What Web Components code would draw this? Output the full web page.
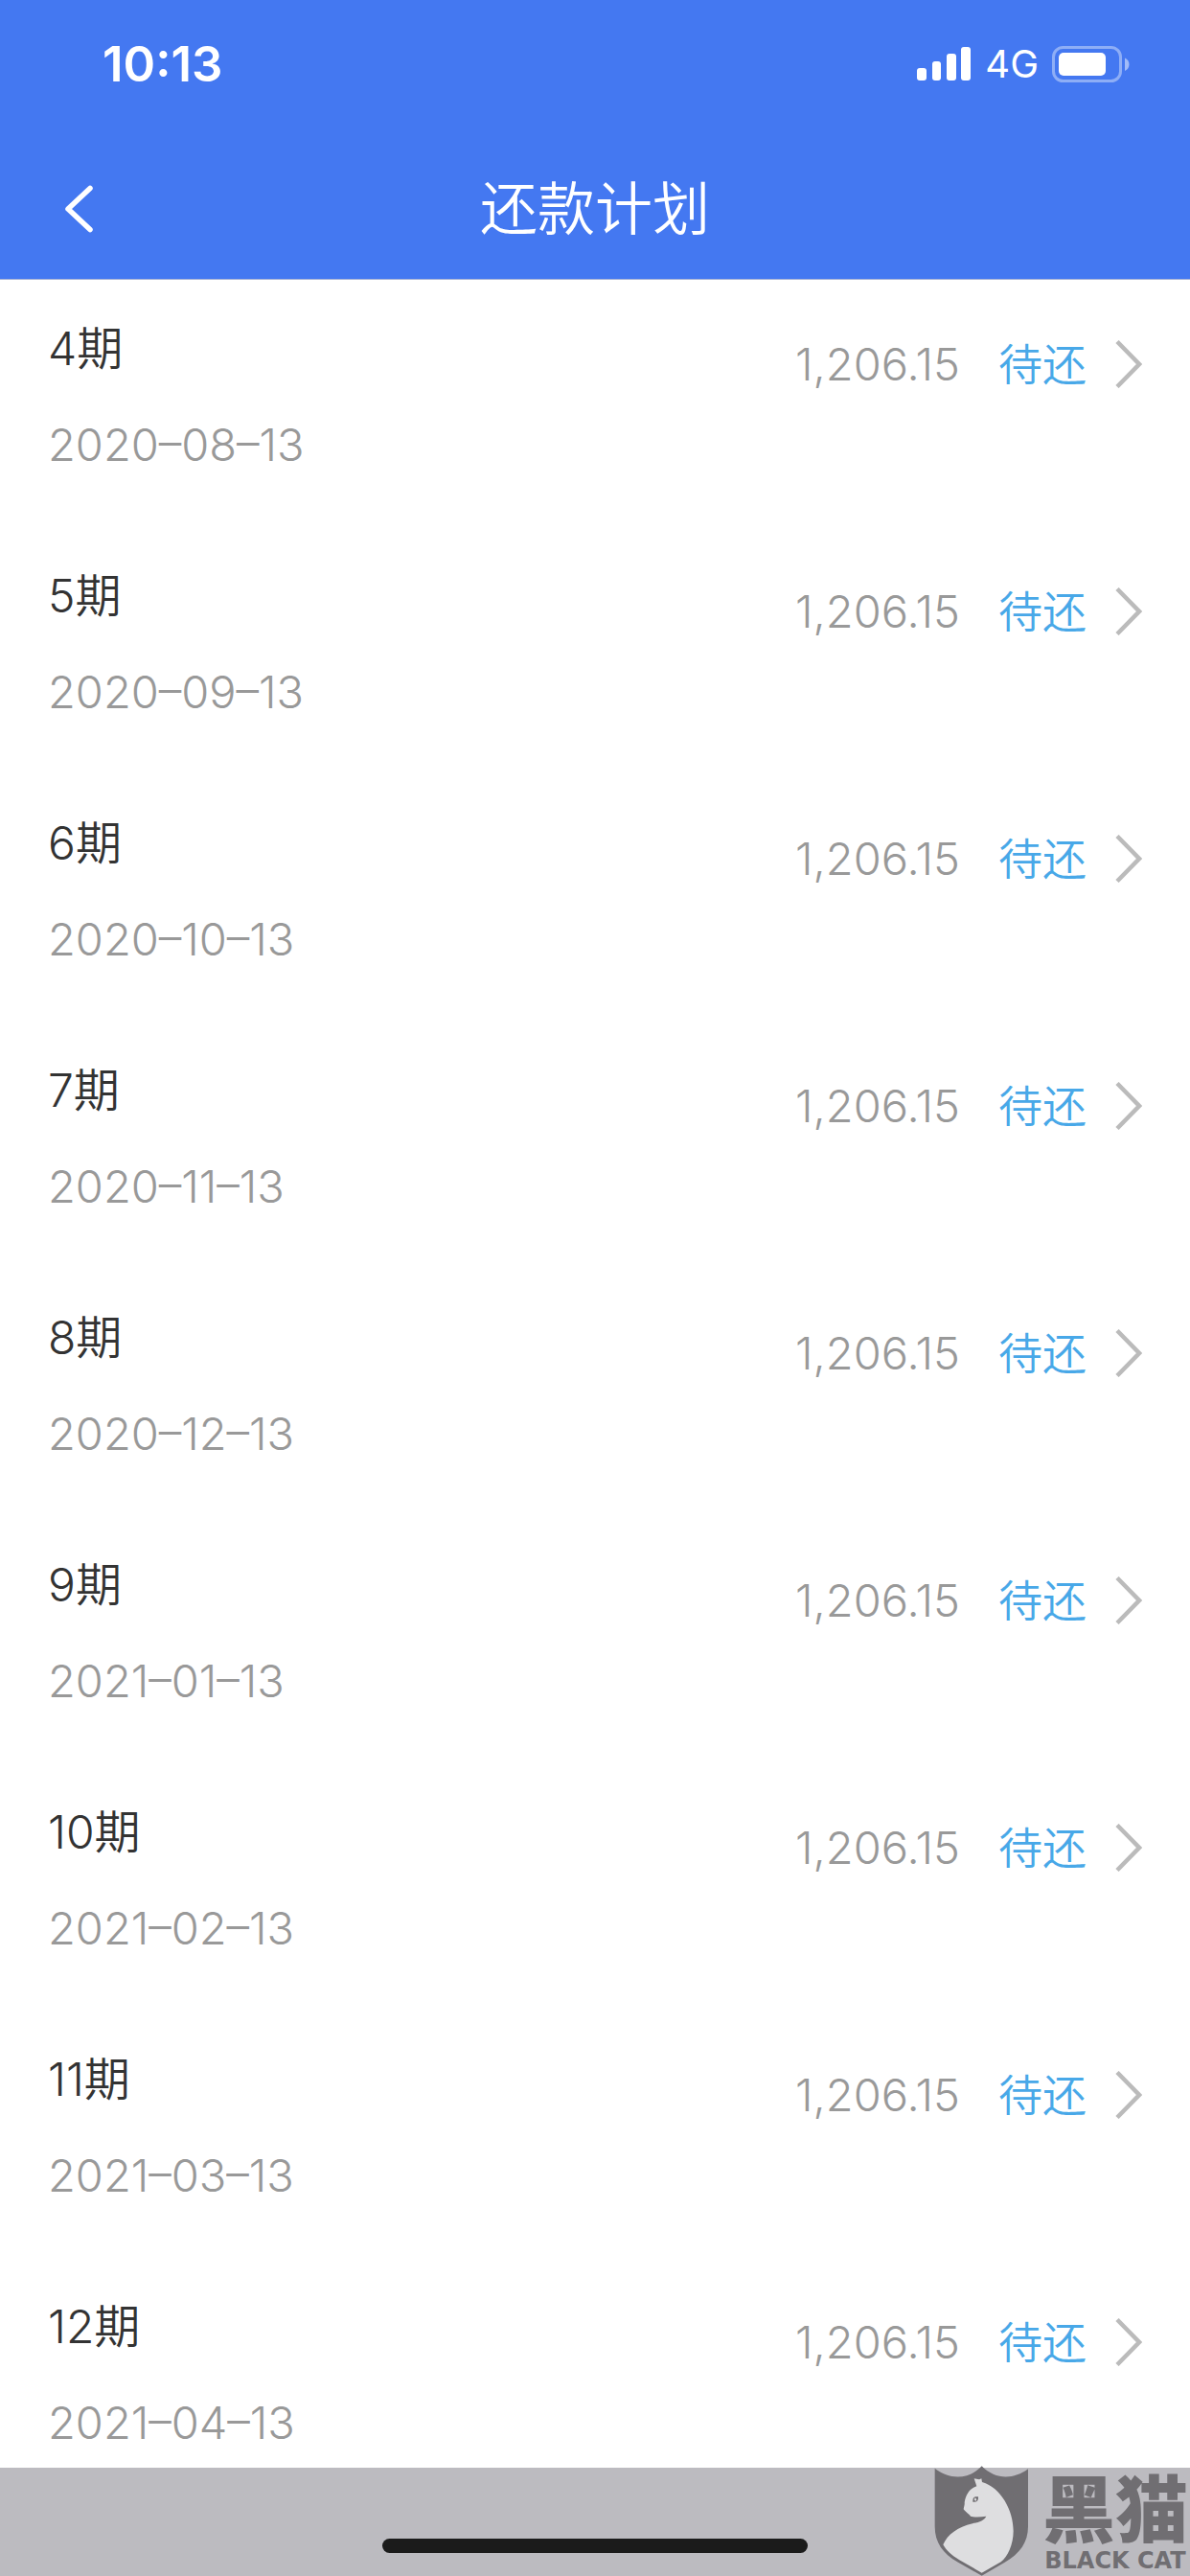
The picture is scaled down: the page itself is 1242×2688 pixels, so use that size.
<!DOCTYPE html>
<html lang="zh-CN">
<head>
<meta charset="utf-8">
<meta name="viewport" content="width=device-width, initial-scale=1">
<title>还款计划</title>
<style>
  body { margin: 0; background: #fff; font-family: Inter, "Noto Sans CJK SC", sans-serif; }
</style>
</head>
<body>
<repayment-app></repayment-app>

<script>
const define = (name, html, setup) => {
  const template = document.createElement('template');
  template.innerHTML = html;
  customElements.define(name, class extends HTMLElement {
    connectedCallback() {
      if (this.shadowRoot) return;
      const root = this.attachShadow({ mode: 'open' });
      root.append(template.content.cloneNode(true));
      if (setup) setup(root, this);
    }
  });
};

define('status-bar', `
  <style>
    :host { display: flex; align-items: center; justify-content: space-between;
      height: 134px; padding: 0 62px 0 107px; box-sizing: border-box; color: #fff; }
    time { font-size: 51px; font-weight: 600; line-height: 60px; }
    .right { display: flex; align-items: center; gap: 14px; font-size: 40px; line-height: 48px; }
    svg { display: block; }
  </style>
  <time>10:13</time>
  <div class="right">
    <svg width="57" height="36" viewBox="0 0 57 36" fill="#fff" aria-hidden="true">
      <rect x="0" y="22" width="10" height="13" rx="3"/><rect x="16" y="15" width="9" height="20" rx="3"/>
      <rect x="31" y="7" width="10" height="28" rx="3"/><rect x="46" y="0" width="10" height="35" rx="3"/>
    </svg>
    <span>4G</span>
    <svg width="82" height="38" viewBox="0 0 82 38" aria-hidden="true">
      <rect x="1.5" y="1.5" width="70" height="35" rx="10" fill="none" stroke="#fff" stroke-opacity=".4" stroke-width="3"/>
      <rect x="7" y="7" width="49" height="24" rx="5" fill="#fff"/>
      <path d="M76 12.500c6 2.500 6 11 0 13.500z" fill="#fff" fill-opacity=".5"/>
    </svg>
  </div>`);

define('nav-bar', `
  <style>
    :host { display: grid; grid-template-columns: 1fr auto 1fr; align-items: center;
      height: 158px; padding: 10px 40px 0; box-sizing: border-box; color: #fff; border-bottom: 1px solid #a9b3d6; }
    button { all: unset; justify-self: start; padding: 20px 26px; cursor: pointer; }
    svg { display: block; }
    h1 { margin: 0; font-size: 60px; line-height: 80px; font-weight: 350; }
  </style>
  <button type="button" aria-label="返回">
    <svg width="32" height="52" viewBox="0 0 32 52" fill="none" stroke="#fff" stroke-width="5.500" stroke-linecap="round" stroke-linejoin="round"><path d="M28 4.500L5 26l23 21.500"/></svg>
  </button>
  <h1><slot></slot></h1>`);

define('plan-row', `
  <style>
    :host { display: block; }
    a { display: flex; align-items: flex-start; justify-content: space-between;
      padding: 42px 50px 56px; color: inherit; text-decoration: none; }
    .term { display: flex; flex-direction: column; gap: 40px; line-height: 60px;
      font-size: 48px; font-weight: 350; color: #333; }
    time { font-size: 47px; font-weight: 350; color: #999; }
    .state, .end { display: flex; align-items: center; }
    .state { gap: 40px; padding-top: 16px;
      font-size: 47px; line-height: 60px; font-weight: 350; color: #999; }
    .end { gap: 30px; }
    .status { font-size: 46px; color: #48a8e8; }
    svg { display: block; }
  </style>
  <a href="#">
    <div class="term"><span class="no"></span><time></time></div>
    <div class="state"><span class="amount"></span>
      <div class="end"><span class="status"><slot></slot></span>
      <svg width="28" height="50" viewBox="0 0 28 50" fill="none" stroke="#bbb" stroke-width="4.500" aria-hidden="true"><path d="M2 1.500L25 25 2 48.500"/></svg></div>
    </div>
  </a>`, (root, host) => {
    root.querySelector('.no').textContent = host.getAttribute('term') + '期';
    const time = root.querySelector('time');
    time.dateTime = host.getAttribute('date');
    time.textContent = time.dateTime.replaceAll('-', '–');
    root.querySelector('.amount').textContent = host.getAttribute('amount');
  });

define('plan-list', `
  <style>:host { display: block; flex: 1; min-height: 0; overflow: hidden; background: #fff; }</style>
  <div class="rows"></div>`, root => {
    const dates = ['2020-08-13', '2020-09-13', '2020-10-13', '2020-11-13', '2020-12-13',
      '2021-01-13', '2021-02-13', '2021-03-13', '2021-04-13'];
    dates.forEach((date, i) => {
      const row = document.createElement('plan-row');
      row.setAttribute('term', i + 4);
      row.setAttribute('date', date);
      row.setAttribute('amount', '1,206.15');
      row.textContent = '待还';
      root.querySelector('.rows').append(row);
    });
  });

define('black-cat-mark', `
  <style>
    :host { display: flex; align-items: flex-end; gap: 14px; padding-right: 2px; color: #706e72; }
    svg { display: block; }
    .name { display: flex; flex-direction: column; align-items: center; padding-bottom: 4px; }
    .zh { font: 900 76px/78px "Liberation Sans", "Noto Sans CJK SC", sans-serif; }
    .en { font: 700 24px/24px "DejaVu Sans", sans-serif; }
  </style>
  <svg width="99" height="115" viewBox="97 98 297 345" aria-hidden="true">
    <path fill="#706e72" d="M99 106C145 142 205 142 246 99C288 142 345 142 391 108V288C391 338 365 374 318 400L246 442L172 400C124 374 99 338 99 288Z"/>
    <path fill="#dedee0" d="M222 138L238 141L245 138L247 149C306 166 345 238 345 302C345 345 327 382 306 399L246 433L176 393C151 378 134 362 125 345C139 313 170 290 217 279C239 274 253 269 260 256C242 258 225 260 211 256C207 249 197 245 189 234C190 226 193 220 192 213C195 191 207 169 230 162Z"/>
    <path fill="#706e72" d="M218 207C218 196 225 193 235 195C236 207 230 213 218 211Z"/>
    <path fill="#dedee0" d="M225 198L230 203L227 209L222 204Z"/>
  </svg>
  <div class="name"><span class="zh">黑猫</span><span class="en">BLACK CAT</span></div>`);

define('home-area', `
  <style>
    :host { position: relative; display: flex; justify-content: center; align-items: flex-end;
      height: 113px; padding-bottom: 24px; box-sizing: border-box; background: #bcbbc0; }
    .bar { width: 444px; height: 15px; border-radius: 8px; background: #1b1b1b; }
    black-cat-mark { position: absolute; right: 0; bottom: 0; }
  </style>
  <div class="bar"></div>
  <black-cat-mark></black-cat-mark>`);

define('repayment-app', `
  <style>
    :host { display: flex; flex-direction: column; height: 100vh; overflow: hidden; }
    header { background: #4478f1; }
  </style>
  <header><status-bar></status-bar><nav-bar>还款计划</nav-bar></header>
  <plan-list></plan-list>
  <home-area></home-area>`);
</script>
</body>
</html>
